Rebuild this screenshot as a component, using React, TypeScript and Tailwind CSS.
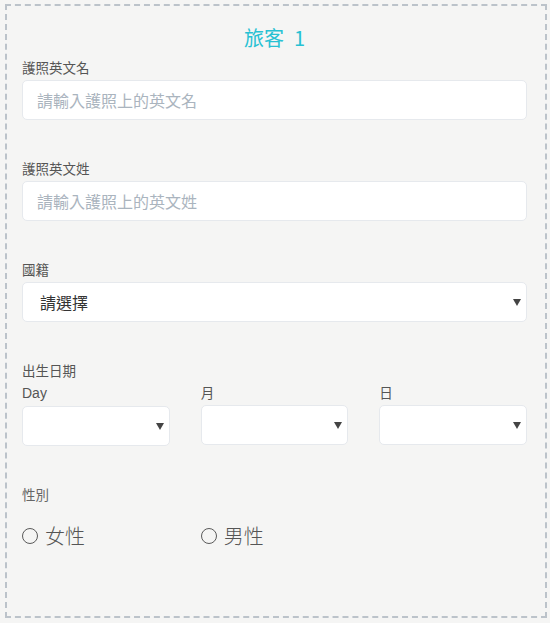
import React from "react";

const cjk = { fontFamily: '"Noto Sans CJK TC", "Liberation Sans", sans-serif' };

function Caret() {
  return (
    <svg width="8" height="7" viewBox="0 0 8 7" className="shrink-0">
      <path d="M0 0 H8 L4 7 Z" fill="#444" />
    </svg>
  );
}

function Label({ children, className = "" }: { children: React.ReactNode; className?: string }) {
  return <div className={`text-[13.5px] leading-[18px] text-[#555] mb-1 ${className}`}>{children}</div>;
}

function TextField({ label, placeholder }: { label: string; placeholder: string }) {
  return (
    <div className="mb-[39px]">
      <Label>{label}</Label>
      <input
        type="text"
        placeholder={placeholder}
        className="w-full h-10 bg-white border border-[#e6e9ed] rounded-[5px] px-[14px] text-[16px] text-[#333] placeholder:text-[#aab4be] focus:outline-none"
        style={cjk}
      />
    </div>
  );
}

function SelectBox({ value }: { value?: string }) {
  return (
    <div className="h-10 bg-white border border-[#e6e9ed] rounded-[5px] pl-[17px] pr-[5px] flex items-center justify-between">
      <span className="text-[16px] text-[#333]">{value}</span>
      <Caret />
    </div>
  );
}

function Radio({ label }: { label: string }) {
  return (
    <label className="flex items-center gap-[7px] cursor-pointer">
      <span className="w-4 h-4 rounded-full border-[1.5px] border-[#5a5a5a] bg-transparent" />
      <span className="text-[20px] leading-[28px] text-[#555] font-light">{label}</span>
    </label>
  );
}

export default function App() {
  return (
    <div className="min-h-[623px] w-[550px] bg-[#f5f5f4] pt-1 pl-[5px] pr-[3px]" style={cjk}>
      <div className="border-2 border-dashed border-[#bcc3ca] pt-[18px] pl-[15px] pr-[18px] pb-[66px]">
        <h2 className="text-center text-[20px] leading-[28px] text-[#27c1d3] mb-[6px]">
          旅客<span className="ml-[10px]">1</span>
        </h2>

        <TextField label="護照英文名" placeholder="請輸入護照上的英文名" />
        <TextField label="護照英文姓" placeholder="請輸入護照上的英文姓" />

        <div className="mb-[39px]">
          <Label>國籍</Label>
          <SelectBox value="請選擇" />
        </div>

        <div className="mb-[39px]">
          <Label>出生日期</Label>
          <div className="grid grid-cols-3 gap-x-[31px]">
            <div>
              <Label className="text-[14px]">
                <span style={{ fontFamily: '"Liberation Sans", sans-serif' }}>Day</span>
              </Label>
              <SelectBox />
            </div>
            <div>
              <Label>月</Label>
              <SelectBox />
            </div>
            <div>
              <Label>日</Label>
              <SelectBox />
            </div>
          </div>
        </div>

        <div>
          <Label className="text-[#666] mb-[19px]">性別</Label>
          <div className="grid grid-cols-3 gap-x-[31px]">
            <Radio label="女性" />
            <Radio label="男性" />
          </div>
        </div>
      </div>
    </div>
  );
}
